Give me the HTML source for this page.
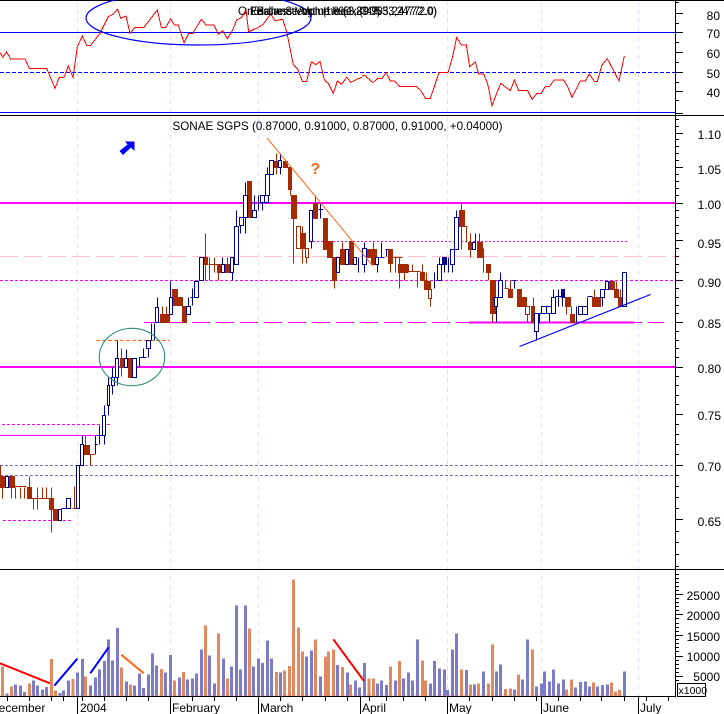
<!DOCTYPE html>
<html><head><meta charset="utf-8"><title>SONAE SGPS</title>
<style>html,body{margin:0;padding:0;background:#fff}svg{display:block}text{font-family:"Liberation Sans",Arial,sans-serif;font-size:12px;fill:#000}</style></head>
<body>
<svg width="724" height="714" viewBox="0 0 724 714" xmlns="http://www.w3.org/2000/svg">
<rect width="724" height="714" fill="#fff"/>
<g shape-rendering="crispEdges" fill="none">
<!-- grid -->
<path d="M77.5 0V696M170.5 0V696M258.5 0V696M447.5 0V696M541.5 0V696M638.5 0V696" stroke="#e2e2ff" stroke-dasharray="5 4"/>
<!-- rsi guides -->
<path d="M0 32.5H675M0 112.5H675" stroke="#0000ff"/>
<path d="M0 72.5H675" stroke="#0000ff" stroke-dasharray="4 2"/>
<!-- price guides -->
<path d="M0 465.5H675M0 475.5H675" stroke="#7a6fb0" stroke-dasharray="3 2"/>
<path d="M0 256.5H675" stroke="#ffc0cb" stroke-dasharray="18 6"/>
<path d="M0 280.5H675M2 424.5H112M3 520.5H72" stroke="#ff00ff" stroke-dasharray="3 2"/>
<path d="M313 241.5H629" stroke="#ff00ff" stroke-dasharray="2 2"/>
<path d="M96 340.5H170" stroke="#ff6a1a" stroke-dasharray="4 2"/>
<path d="M0 435.5H105M144 322.5H186" stroke="#ff00ff"/>
<path d="M192 322.5H664" stroke="#ff00ff" stroke-dasharray="18 6"/>
<path d="M0 203H675M0 367H675M469 322.5H634" stroke="#ff00ff" stroke-width="2"/>
<!-- candles -->
<g transform="translate(.5 .5)">
<path fill="#a52a00" stroke="#a52a00" d="M0 476H4V487H0ZM0 465V476M2 487V498M0 486H26M9 476H14V487H9ZM11 487V498M15 487V498M20 487V498M24 487V498M27 487H31V498H27ZM29 476V487M31 498H49M33 498V509M37 487V509M42 487V498M46 487V498M51 487V498M49 498H53V509H49ZM51 509V532M53 509H58V520H53ZM72 508H76M74 486V508M83 445H89V454H83ZM85 435V445M89 454H94M90 454V465M120 358H124V367H120ZM121 348V376M128 358H132V377H128ZM160 314H169V322H160ZM162 306V314M166 306V314M172 289H177V305H172ZM177 297H182V305H177ZM182 306H186V322H182ZM203 257H207V264H203ZM205 233V257M205 264V280M208 264H217M209 257V280M214 257V272M217 264H221V272H217ZM218 272V280M225 264H229V272H225ZM227 257V264M247 181H251V217H247ZM274 161H278V167H274ZM276 153V161M276 167V174M283 161H287V167H283ZM288 167H291V189H288ZM290 189V195M291 195H296V218H291ZM293 218V263M300 233H305V248H300ZM302 226V233M302 248V263M306 257V263M313 203H317V218H313ZM315 195V203M323 218H327V249H323ZM327 241H332V257H327ZM332 257H336V280H332ZM334 280V288M340 249H345V264H340ZM342 242V249M349 241H353V264H349ZM367 249H376V257H367ZM371 257H376V264H371ZM373 242V249M388 249H392V263H388ZM390 263V272M393 257H402M395 257V272M398 264H407V272H398ZM399 257V288M404 272V280M408 264V272M407 271H420M412 264V271M417 272V287M420 272H424V280H420ZM422 264V272M424 281H429V289H424ZM426 272V281M459 210H464V226H459ZM461 203V210M461 226V249M464 226H467M466 226V242M468 242H473V249H468ZM470 233V242M470 249V257M477 242H482V257H477ZM479 233V242M483 248V272M486 264H490V272H486ZM488 272V280M490 280H495V313H490ZM492 313V322M505 280V288M504 288H508M508 289H512V297H508ZM510 280V289M517 289H521V306H517ZM521 297H526V306H521ZM531 306H534V322H531ZM533 297V306M565 297H570V306H565ZM566 306V314M570 314H574V322H570ZM571 306V314M592 297H596V306H592ZM594 289V297M596 297H600V306H596ZM609 281H614V289H609ZM614 289H618V297H614ZM616 281V289M618 297H622V306H618ZM620 289V297"/>
<path fill="#fff" stroke="#a52a00" d="M296 226H300V248H296ZM305 248H308V257H305ZM525 306H529V314H525ZM527 314V322M428 289H431V298H428ZM430 298V306M430 289V280"/>
<path fill="#fff" stroke="#000090" d="M5 476H8V487H5ZM58 509H61V520H58ZM66 498H70V508H66ZM61 508H66M76 465H79V508H76ZM80 444H83V465H80ZM82 435V444M95 435V454M94 444H97M99 425V444M102 415H105V435H102ZM104 415V405M104 435V444M97 435H102M107 385H109V405H107ZM108 405V415M108 385V377M111 377H114V385H111ZM112 385V394M112 377V367M115 358H118V377H115ZM117 358V340M117 377V385M124 358H127V367H124ZM126 358V349M132 358H136V377H132ZM139 357V367M143 348V357M139 357H146M146 340H150V348H146ZM148 348V357M151 323V340M154 323V340M155 307H158V322H155ZM157 307V297M169 297H172V314H169ZM170 297V281M186 306H190V314H186ZM188 306V297M192 288V305M190 297H193M194 281H198V297H194ZM199 257H203V280H199ZM221 264H224V272H221ZM222 264V257M230 257H233V272H230ZM232 272V280M234 226H238V264H234ZM236 226V210M239 217H243V225H239ZM240 225V233M243 195H247V217H243ZM245 195V182M245 217V233M252 210H256V217H252ZM254 210V195M258 195V210M260 195H264V202H260ZM264 195H268V202H264ZM262 202V210M265 174H269V195H265ZM267 174V167M269 160H273V174H269ZM278 160H281V167H278ZM280 160V153M280 167V174M309 210H312V241H309ZM311 241V248M320 203V218M318 209H323M336 257H339V272H336ZM345 249H348V264H345ZM353 257H356V264H353ZM358 257V272M362 248H366V264H362ZM364 242V248M364 264V272M375 257H378V264H375ZM377 264V272M381 242V257M379 257H384M386 249V256M385 249H388M434 272V288M437 264H441V280H437ZM439 264V257M444 264V272M448 257V272M450 249H454V264H450ZM452 264V272M454 217H458V249H454ZM456 217V210M472 242H475V249H472ZM475 233V242M494 297H497V306H494ZM496 306V322M498 280H502V297H498ZM500 280V272M514 280V288M512 280H516M534 313H538V331H534ZM536 331V340M539 313V323M538 313H541M541 306H546V313H541ZM546 306H551V313H546ZM549 313V322M551 297H555V313H551ZM553 297V289M555 296H563M558 289V306M562 289V306M576 306V322M578 306H582V314H578ZM582 306H587V314H582ZM587 297V306M587 296H592M600 289H604V297H600ZM602 297V306M605 281H608V289H605ZM622 272H626V306H622Z"/>
<path fill="#000090" stroke="#000090" d="M442 257H446V264H442ZM561 289H564V297H561Z"/>
</g>
<!-- rsi line -->
<polyline stroke="#ff0000" stroke-width="3" transform="scale(.33333)" points="0,158 8,172 20,156 32,177 75,177 88,205 140,205 165,265 178,232 192,232 205,198 219,232 232,140 247,108 260,136 272,136 300,100 325,50 340,42 353,28 362,55 378,48 390,100 405,82 432,82 472,30 484,82 497,82 512,57 523,75 535,75 552,128 566,100 578,100 604,58 618,75 642,75 655,103 668,92 682,116 697,92 710,60 725,52 738,30 746,96 775,82 790,72 812,42 825,62 848,58 860,95 880,195 893,207 907,244 920,244 934,185 947,194 960,184 973,240 985,250 1000,280 1012,243 1025,253 1040,232 1052,247 1075,236 1086,232"/>
<polyline stroke="#ff0000" stroke-width="3" transform="translate(362 0) scale(.33333)" points="0,228 8,226 33,248 47,235 60,235 73,218 85,243 98,243 112,259 163,259 177,272 190,295 205,295 231,218 258,218 272,170 284,112 298,135 313,135 323,200 340,186 350,222 365,222 378,255 390,317 403,283 416,250 445,272 457,240 470,272 497,272 510,298 525,280 538,280 550,259 563,259 576,240 605,240 618,262 630,292 655,243 670,243 682,222 697,244 706,244 720,195 736,176 771,243 787,168"/>
<!-- volume -->
<g transform="translate(0 570) scale(.33333)" stroke-width="9">
<path stroke="#7b7bc8" d="M21 378V370M46 378V343M61 378V346M73 378V366M100 378V331M112 378V346M127 378V358M140 378V351M180 378V369M191 378V361M205 378V332M232 378V308M247 378V267M271 378V346M286 378V323M298 378V299M313 378V273M325 378V208M338 378V271M352 378V174M379 378V334M404 378V346M419 378V311M431 378V354M445 378V314M457 378V250M470 378V286M497 378V308M511 378V255M538 378V322M562 378V328M577 378V325M589 378V311M604 378V238M629 378V256M643 378V340M670 378V265M694 378V289M709 378V106M721 378V299M736 378V106M760 378V289M775 378V265M787 378V279M802 378V212M814 378V265M841 378V308M919 378V259M934 378V241M961 378V319M1012 378V285M1042 378V308M1066 378V331M1079 378V352"/>
<path stroke="#e08860" d="M8 378V290M34 378V349M88 378V340M154 378V267M166 378V361M219 378V327M257 378V319M364 378V293M391 378V343M484 378V297M523 378V331M550 378V306M616 378V166M655 378V191M682 378V325M748 378V175M829 378V306M853 378V302M868 378V288M880 378V28M895 378V172M907 378V245M946 378V209M976 378V259M986 378V244M1000 378V238M1027 378V291M1052 378V344"/>
</g>
<g transform="translate(362 570) scale(.33333)" stroke-width="9">
<path stroke="#7b7bc8" d="M8 378V279M46 378V340M59 378V331M73 378V345M100 378V331M125 378V325M139 378V307M151 378V331M166 378V208M205 378V340M217 378V273M232 378V295M247 378V298M257 378V360M271 378V238M283 378V190M313 378V300M338 378V343M364 378V305M404 378V305M415 378V283M457 378V358M482 378V328M496 378V208M523 378V349M538 378V340M547 378V304M562 378V334M574 378V299M589 378V340M604 378V328M640 378V352M655 378V336M670 378V334M682 378V349M706 378V349M721 378V345M736 378V343M787 378V305"/>
<path stroke="#e08860" d="M21 378V325M34 378V325M85 378V289M112 378V273M181 378V271M191 378V331M298 378V299M325 378V343M350 378V340M379 378V340M391 378V223M430 378V357M445 378V355M470 378V313M511 378V238M613 378V358M628 378V328M694 378V338M748 378V337M760 378V364M773 378V360"/>
</g>
<path d="M0 695H625" stroke="#e09878" stroke-dasharray="3 1.4" opacity=".6"/>
<!-- frame -->
<path stroke="#000" d="M0 .5H724M0 115.5H724M0 569.5H724M0 696.5H675M675.5 0V697"/>
<!-- axis ticks -->
<path stroke="#000" d="M676 2.5h3M676 13.5h7M676 23.5h3M676 32.5h7M676 42.5h3M676 52.5h7M676 62.5h3M676 72.5h7M676 82.5h3M676 91.5h7M676 100.5h3M676 113.5h7
M676 119.5h3M676 126.5h3M676 133.5h7M676 139.5h3M676 146.5h3M676 153.5h3M676 160.5h3M676 167.5h7M676 174.5h3M676 181.5h3M676 188.5h3M676 195.5h3M676 203.5h7M676 210.5h3M676 217.5h3M676 225.5h3M676 233.5h3M676 240.5h7M676 248.5h3M676 256.5h3M676 264.5h3M676 272.5h3M676 280.5h7M676 288.5h3M676 297.5h3M676 305.5h3M676 313.5h3M676 322.5h7M676 331.5h3M676 340.5h3M676 348.5h3M676 357.5h3M676 367.5h7M676 376.5h3M676 385.5h3M676 395.5h3M676 404.5h3M676 414.5h7M676 424.5h3M676 434.5h3M676 444.5h3M676 454.5h3M676 465.5h7M676 475.5h3M676 486.5h3M676 497.5h3M676 508.5h3M676 519.5h7M676 531.5h3M676 542.5h3M676 554.5h3M676 566.5h3
M676 574.5h3M676 578.5h3M676 582.5h3M676 586.5h3M676 590.5h3M676 594.5h7M676 598.5h3M676 602.5h3M676 606.5h3M676 610.5h3M676 614.5h7M676 618.5h3M676 623.5h3M676 627.5h3M676 631.5h3M676 635.5h7M676 639.5h3M676 643.5h3M676 647.5h3M676 651.5h3M676 656.5h7M676 660.5h3M676 664.5h3M676 668.5h3M676 672.5h3M676 676.5h7M676 680.5h3
M7.5 697v4M29.5 697v4M51.5 697v4M63.5 697v4M82.5 697v4M104.5 697v4M126.5 697v4M148.5 697v4M192.5 697v4M214.5 697v4M236.5 697v4M280.5 697v4M302.5 697v4M325.5 697v4M347.5 697v4M369.5 697v4M386.5 697v4M403.5 697v4M425.5 697v4M469.5 697v4M492.5 697v4M514.5 697v4M536.5 697v4M558.5 697v4M580.5 697v4M601.5 697v4M624.5 697v4M646.5 697v4M668.5 697v4
M77.5 697v17M170.5 697v17M258.5 697v17M360.5 697v17M447.5 697v17M541.5 697v17M638.5 697v17"/>
<path stroke="#000" fill="#fff" d="M677.5 683.5H705.5V696.5H677.5Z"/>
</g>
<!-- annotations -->
<ellipse cx="198.5" cy="18" rx="112.5" ry="27" fill="none" stroke="#0000ff" stroke-width="1.2"/>
<ellipse cx="132" cy="357" rx="32.7" ry="28.7" fill="none" stroke="#2f8f80" stroke-width="1.1"/>
<path d="M267 138L373 266" stroke="#ff6a1a" fill="none" stroke-width="1"/>
<path d="M519.5 346.5L650.5 294.5" stroke="#0000ff" fill="none" stroke-width="1.2"/>
<g fill="none" stroke-width="2">
<path d="M0 663.3L50 683.3M333.3 639.3L364 681" stroke="#ff0000"/>
<path d="M54.3 685.7L77.3 658.7M90.3 673.3L108.7 647.3" stroke="#0000ff"/>
<path d="M121.3 654.7L143.7 673.3" stroke="#ff6a1a"/>
</g>
<path d="M125 141.5H134.5V151L131 147.5L123 155L119.5 151L127.5 144.5Z" fill="#0000ff"/>
<text x="310.5" y="174" style="font-size:16px;font-weight:bold;fill:#ff6a1a">?</text>
<!-- text -->
<text x="238" y="15" textLength="199" lengthAdjust="spacingAndGlyphs">On Balance Volume (1.89053,24772.0)</text>
<text x="250" y="15" textLength="130" lengthAdjust="spacingAndGlyphs">Relative Strength (1.8953,2347)</text>
<text x="251" y="15" textLength="186" lengthAdjust="spacingAndGlyphs">Easiness Volume Index (0.9053,24772.0)</text>
<text x="172.5" y="130" textLength="330" lengthAdjust="spacingAndGlyphs">SONAE SGPS (0.87000, 0.91000, 0.87000, 0.91000, +0.04000)</text>
<g text-anchor="end">
<text x="720" y="20">80</text><text x="720" y="38">70</text><text x="720" y="58">60</text><text x="720" y="78">50</text><text x="720" y="97">40</text>
<text x="721" y="139">1.10</text><text x="721" y="174">1.05</text><text x="721" y="209">1.00</text><text x="721" y="248">0.95</text><text x="721" y="287">0.90</text><text x="721" y="328">0.85</text><text x="721" y="373">0.80</text><text x="721" y="420">0.75</text><text x="721" y="471">0.70</text><text x="721" y="526">0.65</text>
<text x="720" y="600">25000</text><text x="720" y="620">20000</text><text x="720" y="641">15000</text><text x="720" y="661">10000</text><text x="720" y="681">5000</text>
</g>
<text x="678.5" y="694" style="font-size:10.5px">x1000</text>
<text x="-10" y="712">December</text><text x="80" y="712">2004</text><text x="172" y="712">February</text><text x="260" y="712">March</text><text x="362" y="712">April</text><text x="449" y="712">May</text><text x="543" y="712">June</text><text x="640" y="712">July</text>
</svg>
</body></html>
